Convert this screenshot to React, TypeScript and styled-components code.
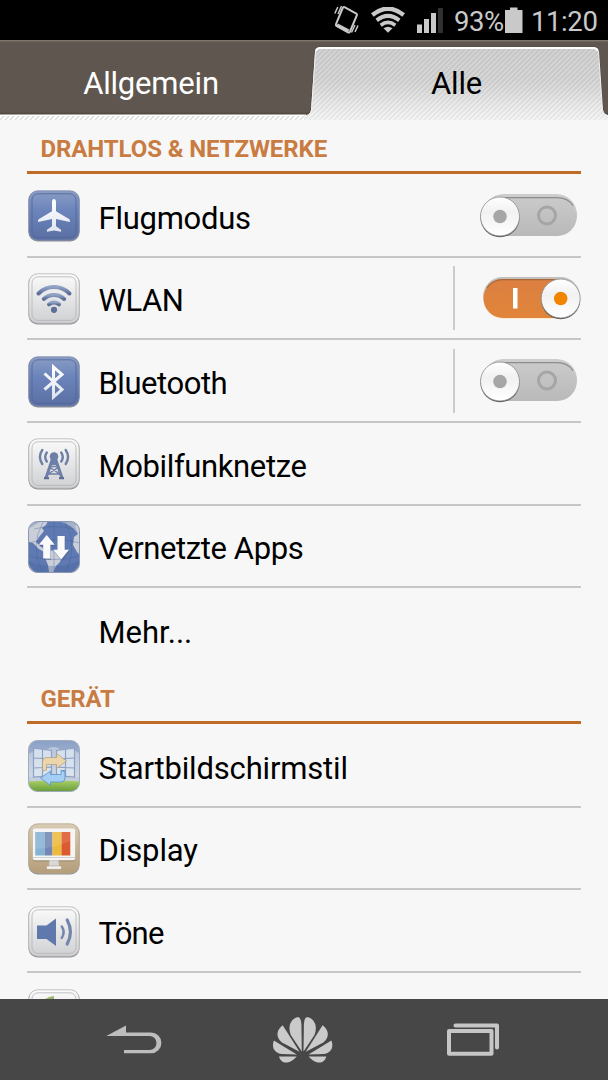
import * as React from 'react';
import styled, { createGlobalStyle } from 'styled-components';

const GlobalStyle = createGlobalStyle`
	* {
		box-sizing: border-box;
	}
	body {
		margin: 0;
		background: #f7f7f7;
		font-family: Roboto, 'Noto Sans', sans-serif;
	}
	svg {
		display: block;
	}
`;

const Screen = styled.div`
	display: flex;
	flex-direction: column;
	width: 608px;
	height: 1080px;
	overflow: hidden;
	background: #f7f7f7;
`;

const StatusBar = styled.header`
	display: flex;
	flex: none;
	align-items: center;
	justify-content: flex-end;
	height: 40px;
	padding-right: 10px;
	background: #000;
	color: #c9c9c9;
`;

const StatusText = styled.span<{ $width: number }>`
	width: ${props => props.$width}px;
	padding-top: 4px;
	font-size: 27.5px;
	line-height: 36px;
	letter-spacing: -0.4px;
	white-space: nowrap;
`;

const StatusIcon = styled.svg<{ $gap: number }>`
	margin-right: ${props => props.$gap}px;
`;

const Tabs = styled.nav`
	display: flex;
	flex: none;
	height: 80px;
	background: linear-gradient(#8a8075 0, #625a51 2px, #5f574f 3px, #5f574f 72px, #4d463f 74px, #fff 75px);
`;

const Tab = styled.div<{ $active?: boolean }>`
	position: relative;
	flex: 1;
	padding-top: 25px;
	text-align: center;
	font-size: 31px;
	line-height: 38px;
	letter-spacing: -0.2px;
	color: ${props => (props.$active ? '#000' : '#fff')};

	span {
		position: relative;
		left: ${props => (props.$active ? 0.5 : -1)}px;
	}
`;

const TabShape = styled.svg`
	position: absolute;
	left: 0;
	top: 0;
`;

const List = styled.main`
	flex: 1;
	min-height: 0;
	padding: 0 27px;
	overflow: hidden;
`;

const SectionTitle = styled.h2`
	height: 54px;
	margin: 0 0 1px;
	padding: 14px 0 0 13.5px;
	border-bottom: 3px solid #bf6c26;
	color: #c97c42;
	font-size: 24px;
	font-weight: 700;
	line-height: 30px;
	letter-spacing: -0.1px;
`;

const Row = styled.div<{ $last?: boolean }>`
	display: flex;
	align-items: center;
	height: ${props => (props.$last ? 81.67 : 82.67)}px;
	padding-top: 2px;
	border-bottom: ${props => (props.$last ? 0 : 2)}px solid #c6c6c6;
`;

const IconSlot = styled.div`
	width: 52px;
	height: 52px;
	margin: 0 18.5px 0 1px;
`;

const Label = styled.span<{ $spacing?: number }>`
	flex: 1;
	padding-top: 5px;
	color: #000;
	font-size: 31px;
	line-height: 38px;
	letter-spacing: ${props => props.$spacing || 0}px;
`;

const Divider = styled.i`
	width: 2px;
	height: 64px;
	margin: -2px 24px 0 0;
	background: #cbcbcb;
`;

const SwitchBox = styled.svg`
	margin-top: -1px;
`;

const NavBar = styled.footer`
	display: flex;
	flex: none;
	align-items: center;
	height: 81px;
	padding-left: 106px;
	background: #474747;

	svg + svg {
		margin-left: 110px;
	}
	svg:last-child {
		margin-left: 114px;
	}
`;

/* colours shared by the glyphs inside the tiles */
const Gradients = () => (
	<svg width="0" height="0" style={{ position: 'absolute' }}>
		<defs>
			<linearGradient id="blue" x2="0" y2="1">
				<stop offset="0" stopColor="#8a9dc4" />
				<stop offset=".4" stopColor="#6b84bb" />
				<stop offset="1" stopColor="#5a6fa2" />
			</linearGradient>
			<linearGradient id="grey" x2="0" y2="1">
				<stop offset="0" stopColor="#fbfbfb" />
				<stop offset="1" stopColor="#cfd0d2" />
			</linearGradient>
			<linearGradient id="glyph" x2="0" y2="1">
				<stop offset="0" stopColor="#8fa3c6" />
				<stop offset="1" stopColor="#5e6f98" />
			</linearGradient>
			<linearGradient id="white" x2="0" y2="1">
				<stop offset="0" stopColor="#fff" />
				<stop offset="1" stopColor="#dfe4ef" />
			</linearGradient>
			<linearGradient id="sand" x2="0" y2="1">
				<stop offset="0" stopColor="#d9ccb5" />
				<stop offset="1" stopColor="#b59d79" />
			</linearGradient>
			<linearGradient id="sky" x2="0" y2="1">
				<stop offset="0" stopColor="#8a9fc6" />
				<stop offset=".75" stopColor="#c3cfdd" />
			</linearGradient>
			<linearGradient id="grass" x2="0" y2="1">
				<stop offset="0" stopColor="#a9cf65" />
				<stop offset="1" stopColor="#659b39" />
			</linearGradient>
			<linearGradient id="track" x2="0" y2="1">
				<stop offset="0" stopColor="#cacaca" />
				<stop offset="1" stopColor="#b9b9b9" />
			</linearGradient>
			<linearGradient id="trackOn" x2="0" y2="1">
				<stop offset="0" stopColor="#dc7f42" />
				<stop offset="1" stopColor="#e08539" />
			</linearGradient>
			<linearGradient id="knob" x2="0" y2="1">
				<stop offset="0" stopColor="#fff" />
				<stop offset=".4" stopColor="#f1f1f1" />
				<stop offset="1" stopColor="#fff" />
			</linearGradient>
			<clipPath id="tile">
				<rect x=".5" y=".5" width="51" height="51" rx="9" />
			</clipPath>
		</defs>
	</svg>
);

type Tone = 'blue' | 'grey' | 'sand';

const edges: Record<Tone, [string, string]> = {
	blue: ['#7f8cab', '#50649a'],
	grey: ['#b4b4b4', '#b3b4b8'],
	sand: ['#b5a78d', '#cbbb9e']
};

const Tile = ({ tone, children }: { tone: Tone; children: React.ReactNode }) => (
	<svg width="52" height="52" viewBox="0 0 52 52">
		<rect x=".5" y="1" width="51" height="50.5" rx="9" fill="#8f9095" />
		<rect x=".8" y=".8" width="50.4" height="49.4" rx="9" fill={`url(#${tone})`} stroke={edges[tone][0]} strokeWidth=".8" />
		{tone !== 'sand' && (
			<rect x="4" y="3.8" width="44" height="43.6" rx="6" fill="none" stroke={edges[tone][1]} strokeWidth=".8" />
		)}
		{children}
	</svg>
);

const PlaneIcon = () => (
	<Tile tone="blue">
		<path
			d="M26 9c1.3 0 2 1.4 2 3.4v8.9l13 7.6c.8.5 1.2 2 .8 3.2L28 29v7.2l4.7 3.4c.5.4.6 1.5.3 2.2L26 40.6l-7 1.2c-.3-.7-.2-1.800.3-2.200l4.700-3.400V29l-13.800 3.100c-.4-1.200 0-2.700.8-3.200l13-7.600v-8.900C24 10.400 24.700 9 26 9z"
			fill="url(#white)"
		/>
	</Tile>
);

const WlanIcon = () => (
	<Tile tone="grey">
		<g fill="none" stroke="url(#glyph)" strokeWidth="4" strokeLinecap="round">
			<path d="M10.5 20.5a22 22 0 0 1 31 0" />
			<path d="M15.8 26a15.3 15.3 0 0 1 20.4 0" />
			<path d="M21 31.3a8.5 8.5 0 0 1 10 0" />
		</g>
		<circle cx="26" cy="36.8" r="3.1" fill="#5e6f98" />
	</Tile>
);

const BluetoothIcon = () => (
	<Tile tone="blue">
		<path
			d="M16.5 17.5L34 33.5 25.5 41V11L34 18.500 16.500 33.500"
			fill="none"
			stroke="url(#white)"
			strokeWidth="3"
		/>
	</Tile>
);

const MobileIcon = () => (
	<Tile tone="grey">
		<g fill="none" stroke="#6d7fa6" strokeWidth="2.4" strokeLinecap="round">
			<path d="M18.8 14.5q-3.2 4.5 0 9M14.3 12q-4.700 6.800 0 14" />
			<path d="M33.2 14.5q3.2 4.5 0 9M37.7 12q4.700 6.800 0 14" />
			<path d="M24.8 20L18 40M27.2 20L34 40" strokeWidth="3" strokeLinecap="butt" />
			<path d="M22 28.5h8M20 36h12M22 29.5l9 6M30 29.5l-9 6" strokeWidth="1.5" />
		</g>
		<circle cx="26" cy="18.5" r="4.3" fill="#6d7fa6" />
		<path d="M24 20h4l2 7h-8z" fill="#6d7fa6" />
		<path d="M16 39h5v2.200h-5zM31 39h5v2.200h-5z" fill="#5e6f98" />
	</Tile>
);

const AppsIcon = () => (
	<svg width="52" height="52" viewBox="0 0 52 52">
		<g clipPath="url(#tile)">
			<rect width="52" height="52" fill="#a6b2c9" />
			<circle cx="26" cy="29" r="29" fill="#5f7ab3" />
			<path
				d="M0 8L12 1l8-1-2 4-4 3 2 3-5 6-3 5 4 4 4 3 3 1-1 3-7-4-6-6-5-1zM20 29l7 1 7 5-2 6-4 4-3 7-4-1-1-7-3-7zM47 5l5-2v31l-3-3-4-7 1-8 4-3z"
				fill="#c9ced9"
			/>
			<path d="M26 0v52M0 22q26-7 52 0M0 35q26 7 52 0M6 8q20-5 40 0M15 1Q1 26 15 52M37 1q14 25 0 51" fill="none" stroke="#40598f" strokeOpacity=".4" strokeWidth=".8" />
			<path d="M0 40q26 10 52 0v12H0z" fill="#425c96" opacity=".3" />
		</g>
		<rect x=".5" y=".5" width="51" height="51" rx="9" fill="none" stroke="#8996b1" />
		<path d="M19.3 15.500l8 9.800h-4.300v13.700h-7.200V25.300h-4.300z" fill="#465b88" opacity=".5" />
		<path d="M18.700 14l8 9.800h-4.300v13.700h-7.200V23.800h-4.300z" fill="#fafafa" />
		<path d="M33.800 40l-8-9.800h4.300V16.500h7.200v13.700h4.300z" fill="#465b88" opacity=".5" />
		<path d="M33.200 38.500l-8-9.800h4.300V15h7.200v13.700H41z" fill="#fafafa" />
	</svg>
);

const HomeStyleIcon = () => (
	<svg width="52" height="52" viewBox="0 0 52 52">
		<g clipPath="url(#tile)">
			<rect width="52" height="52" fill="url(#sky)" />
			<path d="M0 15q9-8 17-4 9-8 17 0 10-4 18 3v23H0z" fill="#dce4ed" opacity=".5" />
			<path d="M0 41.5q26-2 52 0V52H0z" fill="url(#grass)" />
			<g fill="#dfe9f3" fillOpacity=".7" stroke="#8ea1c2" strokeWidth="1.2">
				<path d="M5.500 8l18 2.500v25L5.500 37z" />
				<path d="M46.500 8l-18 2.500v25l18 1.500z" />
				<path d="M5.500 18l18 .8M5.500 28l18-.8M14.500 9.300v27M46.500 18l-18 .8M46.500 28l-18-.8M37.500 9.300v27" />
			</g>
		</g>
		<rect x=".5" y=".5" width="51" height="51" rx="9" fill="none" stroke="#a0acbd" />
		<path d="M33 30h4v7q0 4-3 5h-6v-4h5z" fill="#7399ca" />
		<path d="M14.500 31v-9.500q0-4 4-4H28.500V13.500l10 7.500-10 7.500V24.500H18.500V30z" fill="#ecd6a9" stroke="#a99c83" strokeWidth=".7" />
		<path d="M37 32v6q0 4-4 4H22.500v3.500L12.500 38l10-7v3.500H33V30z" fill="#a5cef4" stroke="#5e8fc9" strokeWidth=".8" />
	</svg>
);

const DisplayIcon = () => (
	<Tile tone="sand">
		<rect x="4.8" y="6.5" width="42.4" height="32" rx="2" fill="#8d7d64" opacity=".6" />
		<rect x="4.8" y="5.5" width="42.4" height="31.7" rx="2" fill="#f5f5f5" />
		<path d="M5 34.5h42" stroke="#cfcfcf" />
		<path d="M7.2 9h9.800v23.500H7.200z" fill="#86b3d4" />
		<path d="M17 9h7.500v23.500H17z" fill="#7586b4" />
		<path d="M24.5 9h9v23.500h-9z" fill="#edbb3b" />
		<path d="M33.5 9h8.800v23.500h-8.800z" fill="#dc5a30" />
		<path d="M7.2 9h35.100v9q-17 7-35.100 8z" fill="#fff" opacity=".12" />
		<path d="M21.5 37.200h9l.5 6.300h-10z" fill="#d8d8d8" />
		<rect x="18.5" y="43" width="15" height="3.3" rx="1" fill="#f4f4f4" stroke="#a08f74" strokeWidth=".5" />
	</Tile>
);

const SoundIcon = () => (
	<Tile tone="grey">
		<path d="M9 19.5h9.500L28 12.500v27.500l-9.500-7H9z" fill="#6079ac" />
		<g fill="none" stroke="#7386ac" strokeLinecap="round">
			<path d="M33.8 20.5q3.700 5.700 0 11.400" strokeWidth="2.5" />
			<path d="M39.2 14q6.500 12 0 24" strokeWidth="3.2" />
		</g>
	</Tile>
);

const StorageIcon = () => (
	<Tile tone="grey">
		<path d="M14 14q3-6 12-7v5q-5 0-7 4z" fill="#9cb56c" />
	</Tile>
);

const Switch = ({ on }: { on?: boolean }) => (
	<SwitchBox width="102" height="44" viewBox="0 0 102 44">
		{on ? (
			<g>
				<rect x="4" y="1" width="97" height="39" rx="19.5" fill="#c5c0bc" />
				<rect x="4.5" y="3.5" width="96" height="39.3" rx="19.6" fill="#ffe3c5" />
				<rect x="4.5" y="3" width="96" height="39" rx="19.5" fill="url(#trackOn)" />
				<path d="M8 12Q13 3.700 24 3.700h57" fill="none" stroke="#a9683c" strokeWidth="1.2" />
				<rect x="34" y="12" width="4.5" height="20.5" fill="#fff" />
			</g>
		) : (
			<g>
				<rect x="4" y="0" width="94" height="41" rx="20.5" fill="#cdcdcd" />
				<rect x="4" y="3" width="93.8" height="39" rx="19.5" fill="url(#track)" />
				<path d="M22 3.600h56q11 0 16 8" fill="none" stroke="#8d8d8d" strokeWidth="1.2" />
				<circle cx="68" cy="21.500" r="8.5" fill="none" stroke="#a5a5a5" strokeWidth="3" />
			</g>
		)}
		<circle cx={on ? 81.7 : 21} cy="23.7" r="19.5" fill="#555" />
		<circle cx={on ? 81.7 : 21} cy="22.5" r="19.5" fill="url(#knob)" stroke="#8e8e8e" strokeWidth=".8" />
		<circle cx={on ? 81.7 : 21} cy="22.5" r="6.8" fill={on ? '#f18500' : '#a6a6a6'} />
	</SwitchBox>
);

const BackIcon = () => (
	<svg width="56" height="30" viewBox="0 0 56 30">
		<path d="M.3 11L20 .5v7h25a10.400 10.400 0 0 1 0 20.800H18v-3.300h25.500a7 7 0 0 0 0-14z" fill="#bdbdbd" />
	</svg>
);

const petals = [
	'M29.8 34.5L18.8 18C16 11 17.500 3 25 .3c3-.8 4 2 4.400 7z',
	'M27.5 34.8L10 25.5C3.5 20 4.200 13 10.700 8.200z',
	'M24.8 37.5L10 37C1.5 36-.5 29 1.900 23.500z',
	'M24.7 39.5H7C8 44 12 46.5 16.500 45.300 20 44 23 41.500 24.700 39.500z'
];

const HomeIcon = () => (
	<svg width="61" height="46" viewBox="0 0 61 46" fill="#cacaca">
		{petals.map(d => (
			<path key={d} d={d} />
		))}
		<g transform="translate(61.3) scale(-1 1)">
			{petals.map(d => (
				<path key={d} d={d} />
			))}
		</g>
	</svg>
);

const RecentsIcon = () => (
	<svg width="53" height="33" viewBox="0 0 53 33" fill="none" stroke="#c6c6c6" strokeLinejoin="round">
		<rect x="2" y="8" width="42.5" height="22.7" strokeWidth="4" />
		<path d="M8.5 2.500h41.500v22" strokeWidth="4" strokeLinecap="round" />
	</svg>
);

interface ISetting {
	label: string;
	spacing?: number;
	icon?: React.ReactNode;
	toggle?: 'on' | 'off';
	divided?: boolean;
	last?: boolean;
}

const network: ISetting[] = [
	{ label: 'Flugmodus', spacing: -0.25, icon: <PlaneIcon />, toggle: 'off' },
	{ label: 'WLAN', spacing: -0.45, icon: <WlanIcon />, toggle: 'on', divided: true },
	{ label: 'Bluetooth', spacing: -0.45, icon: <BluetoothIcon />, toggle: 'off', divided: true },
	{ label: 'Mobilfunknetze', spacing: -0.37, icon: <MobileIcon /> },
	{ label: 'Vernetzte Apps', spacing: -0.4, icon: <AppsIcon /> },
	{ label: 'Mehr...', last: true }
];

const device: ISetting[] = [
	{ label: 'Startbildschirmstil', spacing: -0.17, icon: <HomeStyleIcon /> },
	{ label: 'Display', spacing: -0.1, icon: <DisplayIcon /> },
	{ label: 'Töne', spacing: -0.8, icon: <SoundIcon /> },
	{ label: '', icon: <StorageIcon />, last: true }
];

const SettingRow = ({ label, spacing, icon, toggle, divided, last }: ISetting) => (
	<Row $last={last}>
		<IconSlot>{icon}</IconSlot>
		<Label $spacing={spacing}>{label}</Label>
		{divided && <Divider />}
		{toggle && <Switch on={toggle === 'on'} />}
	</Row>
);

export default function App() {
	return (
		<Screen>
			<GlobalStyle />
			<Gradients />
			<StatusBar>
				<StatusIcon $gap={12} width="25" height="30" viewBox="0 0 25 30" fill="none" stroke="#c9c9c9">
					<path d="M10.5 2.200l11.800 6.300q1 .6.6 1.700L16 26.500q-.7 1.400-2 .8L2.500 21q-1-.7-.5-1.800L8.700 3q.6-1.300 1.800-.8z" strokeWidth="2" />
					<path d="M3 20l11.500 6" strokeWidth="3.5" />
					<path d="M.8 8.500l3-6.500M4 9l3.500-8M17.500 27.500l3.500-7.500M21 27l3-6.500" strokeWidth="1.5" />
				</StatusIcon>
				<StatusIcon $gap={12} width="34" height="26" viewBox="0 0 34 26" fill="none" stroke="#c9c9c9">
					<path d="M1.3 8q15.700-12.500 31.400 0" strokeWidth="4.5" />
					<path d="M5.7 13.400q11.300-9 22.600 0" strokeWidth="4" />
					<path d="M9.700 18.200q7.300-5.600 14.600 0" strokeWidth="3.600" />
					<path d="M12.500 21.300q4.500-3 9 0L17 25.800z" fill="#c9c9c9" stroke="none" />
				</StatusIcon>
				<StatusIcon $gap={11} width="26" height="26" viewBox="0 0 26 26" fill="#c9c9c9">
					<path d="M0 17.500h5V26H0zM7 12h5v14H7zM14 6h5v20h-5z" />
					<path d="M21 1h5v25h-5z" fill="#303030" />
				</StatusIcon>
				<StatusText $width={51}>93%</StatusText>
				<StatusIcon $gap={8} width="18" height="26" viewBox="0 0 18 26" fill="#c9c9c9">
					<path d="M5 .5h7.500V3H17.500v23H0V3h5z" />
				</StatusIcon>
				<StatusText $width={67}>11:20</StatusText>
			</StatusBar>
			<Tabs>
				<Tab>
					<TabShape width="304" height="80" viewBox="0 0 304 80">
						<defs>
							<pattern id="stripes" width="5" height="5" patternUnits="userSpaceOnUse">
								<path d="M-1 6L6-1M-1 1L1-1M4 6l2-2" stroke="#b0b0b0" strokeWidth="1.7" />
							</pattern>
						</defs>
						<rect y="76" width="304" height="4" fill="url(#stripes)" opacity=".4" />
					</TabShape>
					<span>Allgemein</span>
				</Tab>
				<Tab $active>
					<TabShape width="304" height="80" viewBox="0 0 304 80">
						<defs>
							<linearGradient id="tabFill" x2="0" y2="1">
								<stop offset="0" stopColor="#d2d2d2" />
								<stop offset=".6" stopColor="#dadada" />
								<stop offset="1" stopColor="#eeeeee" />
							</linearGradient>
							<linearGradient id="stripeFade" x2="0" y2="1">
								<stop offset=".4" stopColor="#fff" stopOpacity="0" />
								<stop offset="1" stopColor="#fff" stopOpacity=".45" />
							</linearGradient>
						</defs>
						<path
							d="M0 75h2q4-1 4.500-5L10.500 12q.6-5 5-5H290q4.500 0 5 5l4 58q.5 4 5 5v5H0z"
							fill="url(#tabFill)"
						/>
						<path
							d="M2 75q4-1 4.500-5L10.500 12q.6-5 5-5H290q4.500 0 5 5l4 58q.5 4 5 5"
							fill="none"
							stroke="#4f4841"
						/>
						<path d="M0 75.500h2q5-1 5.500-5L11.500 9h282.500l4 61.500q.5 4 6 5V80H0z" fill="url(#stripes)" opacity=".4" />
						<path d="M0 75.500h2q5-1 5.500-5L11.500 13h282.500l4 57.500q.5 4 6 5V80H0z" fill="url(#stripeFade)" />
						<path d="M12 11q.8-3 4-3h273.500q3.500 0 4.200 3" fill="none" stroke="#fff" strokeWidth="2" />
						<path d="M11.500 11L7.500 70q-.5 5-6 6M294.500 11l4 59q.5 4 5.500 6" fill="none" stroke="#f2f2f2" />
					</TabShape>
					<span>Alle</span>
				</Tab>
			</Tabs>
			<List>
				<SectionTitle>DRAHTLOS &amp; NETZWERKE</SectionTitle>
				{network.map(item => (
					<SettingRow key={item.label} {...item} />
				))}
				<SectionTitle>GERÄT</SectionTitle>
				{device.map(item => (
					<SettingRow key={item.label} {...item} />
				))}
			</List>
			<NavBar>
				<BackIcon />
				<HomeIcon />
				<RecentsIcon />
			</NavBar>
		</Screen>
	);
}
